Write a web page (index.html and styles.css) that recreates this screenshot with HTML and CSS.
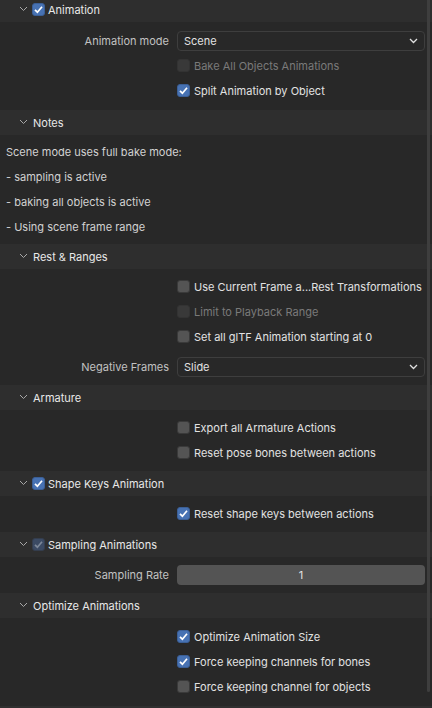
FILE: index.html
```html
<!DOCTYPE html>
<html>
<head>
<meta charset="utf-8">
<link rel="stylesheet" href="styles.css">
</head>
<body>
<div class="page">
  <div class="hdr hdr-first">
    <span class="chev"><svg width="9" height="6" viewBox="0 0 9 6"><path d="M1 1 L4.5 4.5 L8 1" fill="none" stroke="#a8a8a8" stroke-width="1"/></svg></span>
    <span class="cb on hcb"><svg width="13" height="13" viewBox="0 0 13 13"><path d="M3 6.8 L5.4 9.2 L10 3.8" fill="none" stroke="#fff" stroke-width="1.7"/></svg></span>
    <span class="htitle">Animation</span>
  </div>
  <div class="body body-anim">
    <div class="row">
      <div class="lbl">Animation mode</div>
      <div class="dd"><span>Scene</span><svg width="9" height="6" viewBox="0 0 9 6"><path d="M1 1 L4.5 4.5 L8 1" fill="none" stroke="#e0e0e0" stroke-width="1.3"/></svg></div>
    </div>
    <div class="row">
      <div></div>
      <div class="chk dis"><span class="cb"></span><span>Bake All Objects Animations</span></div>
    </div>
    <div class="row">
      <div></div>
      <div class="chk"><span class="cb on"><svg width="13" height="13" viewBox="0 0 13 13"><path d="M3 6.8 L5.4 9.2 L10 3.8" fill="none" stroke="#fff" stroke-width="1.7"/></svg></span><span>Split Animation by Object</span></div>
    </div>
  </div>

  <div class="hdr">
    <span class="chev"><svg width="9" height="6" viewBox="0 0 9 6"><path d="M1 1 L4.5 4.5 L8 1" fill="none" stroke="#a8a8a8" stroke-width="1"/></svg></span>
    <span class="htitle">Notes</span>
  </div>
  <div class="body body-notes">
    <div class="note">Scene mode uses full bake mode:</div>
    <div class="note">- sampling is active</div>
    <div class="note">- baking all objects is active</div>
    <div class="note">- Using scene frame range</div>
  </div>

  <div class="hdr">
    <span class="chev"><svg width="9" height="6" viewBox="0 0 9 6"><path d="M1 1 L4.5 4.5 L8 1" fill="none" stroke="#a8a8a8" stroke-width="1"/></svg></span>
    <span class="htitle">Rest &amp; Ranges</span>
  </div>
  <div class="body">
    <div class="row">
      <div></div>
      <div class="chk"><span class="cb"></span><span>Use Current Frame a...Rest Transformations</span></div>
    </div>
    <div class="row">
      <div></div>
      <div class="chk dis"><span class="cb"></span><span>Limit to Playback Range</span></div>
    </div>
    <div class="row">
      <div></div>
      <div class="chk"><span class="cb"></span><span>Set all glTF Animation starting at 0</span></div>
    </div>
    <div class="row row-gap">
      <div class="lbl">Negative Frames</div>
      <div class="dd"><span>Slide</span><svg width="9" height="6" viewBox="0 0 9 6"><path d="M1 1 L4.5 4.5 L8 1" fill="none" stroke="#e0e0e0" stroke-width="1.3"/></svg></div>
    </div>
  </div>

  <div class="hdr">
    <span class="chev"><svg width="9" height="6" viewBox="0 0 9 6"><path d="M1 1 L4.5 4.5 L8 1" fill="none" stroke="#a8a8a8" stroke-width="1"/></svg></span>
    <span class="htitle">Armature</span>
  </div>
  <div class="body">
    <div class="row">
      <div></div>
      <div class="chk"><span class="cb"></span><span>Export all Armature Actions</span></div>
    </div>
    <div class="row">
      <div></div>
      <div class="chk"><span class="cb"></span><span>Reset pose bones between actions</span></div>
    </div>
  </div>

  <div class="hdr">
    <span class="chev"><svg width="9" height="6" viewBox="0 0 9 6"><path d="M1 1 L4.5 4.5 L8 1" fill="none" stroke="#a8a8a8" stroke-width="1"/></svg></span>
    <span class="cb on hcb"><svg width="13" height="13" viewBox="0 0 13 13"><path d="M3 6.8 L5.4 9.2 L10 3.8" fill="none" stroke="#fff" stroke-width="1.7"/></svg></span>
    <span class="htitle">Shape Keys Animation</span>
  </div>
  <div class="body">
    <div class="row">
      <div></div>
      <div class="chk"><span class="cb on"><svg width="13" height="13" viewBox="0 0 13 13"><path d="M3 6.8 L5.4 9.2 L10 3.8" fill="none" stroke="#fff" stroke-width="1.7"/></svg></span><span>Reset shape keys between actions</span></div>
    </div>
  </div>

  <div class="hdr">
    <span class="chev"><svg width="9" height="6" viewBox="0 0 9 6"><path d="M1 1 L4.5 4.5 L8 1" fill="none" stroke="#a8a8a8" stroke-width="1"/></svg></span>
    <span class="cb on-dis hcb"><svg width="13" height="13" viewBox="0 0 13 13"><path d="M3 6.8 L5.4 9.2 L10 3.8" fill="none" stroke="#7c8798" stroke-width="1.7"/></svg></span>
    <span class="htitle">Sampling Animations</span>
  </div>
  <div class="body">
    <div class="row">
      <div class="lbl">Sampling Rate</div>
      <div class="num">1</div>
    </div>
  </div>

  <div class="hdr">
    <span class="chev"><svg width="9" height="6" viewBox="0 0 9 6"><path d="M1 1 L4.5 4.5 L8 1" fill="none" stroke="#a8a8a8" stroke-width="1"/></svg></span>
    <span class="htitle">Optimize Animations</span>
  </div>
  <div class="body body-last">
    <div class="row">
      <div></div>
      <div class="chk"><span class="cb on"><svg width="13" height="13" viewBox="0 0 13 13"><path d="M3 6.8 L5.4 9.2 L10 3.8" fill="none" stroke="#fff" stroke-width="1.7"/></svg></span><span>Optimize Animation Size</span></div>
    </div>
    <div class="row">
      <div></div>
      <div class="chk"><span class="cb on"><svg width="13" height="13" viewBox="0 0 13 13"><path d="M3 6.8 L5.4 9.2 L10 3.8" fill="none" stroke="#fff" stroke-width="1.7"/></svg></span><span>Force keeping channels for bones</span></div>
    </div>
    <div class="row">
      <div></div>
      <div class="chk"><span class="cb"></span><span>Force keeping channel for objects</span></div>
    </div>
  </div>
  <div class="foot"></div>
  <div class="scroll"></div>
</div>
</body>
</html>
```

FILE: styles.css
```css
* { box-sizing: border-box; }
html, body {
  margin: 0;
  padding: 0;
  background: #282828;
}
body {
  font-family: Inter, "Noto Sans", sans-serif;
  font-size: 11px;
  color: #e0e0e0;
  width: 432px;
  height: 708px;
  overflow: hidden;
}
.page {
  position: relative;
  width: 432px;
}
.hdr {
  height: 25px;
  background: #2e2e2e;
  display: flex;
  align-items: center;
  padding-left: 19px;
}
.hdr-first {
  margin-top: -3px;
}
.chev {
  width: 9px;
  height: 6px;
  display: flex;
  margin-right: 5px;
  margin-top: -2px;
}
.chev svg { display: block; }
.htitle {
  color: #e8e8e8;
}
.hcb {
  margin-left: -1px;
  margin-right: 3px;
}
.body {
  padding: 5px 0 6px 0;
}
.body-anim {
  padding: 6px 0 7px 0;
}
.body-notes {
  padding: 5px 0 4px 6px;
}
.body-last {
  padding: 6px 0 7px 0;
}
.note {
  height: 25px;
  line-height: 25px;
  color: #d2d2d2;
}
.row {
  height: 25px;
  display: grid;
  grid-template-columns: 169px 248px;
  column-gap: 8px;
  align-items: center;
}
.row-gap {
  margin-top: 5px;
}
.lbl {
  text-align: right;
  color: #c2c2c2;
}
.chk {
  display: flex;
  align-items: center;
  gap: 4px;
  color: #e2e2e2;
  white-space: nowrap;
}
.chk.dis { color: #7a7a7a; }
.cb {
  width: 13px;
  height: 13px;
  border-radius: 3px;
  background: #545454;
  border: 1px solid #3a3a3a;
  display: inline-flex;
  flex-shrink: 0;
  align-items: center;
  justify-content: center;
}
.cb svg { display: block; margin: -1px; }
.chk.dis .cb {
  background: #393939;
  border-color: #333;
}
.cb.on {
  background: #4772b3;
  border-color: #3b5f96;
}
.cb.on-dis {
  background: #3b4a63;
  border-color: #343d4d;
}
.dd {
  height: 20px;
  border: 1px solid #3e3e3e;
  border-radius: 4px;
  background: #282828;
  display: flex;
  align-items: center;
  justify-content: space-between;
  padding: 0 6px 0 6px;
  color: #e2e2e2;
}
.dd svg { display: block; }
.num {
  height: 20px;
  border-radius: 4px;
  background: #545454;
  display: flex;
  align-items: center;
  justify-content: center;
  color: #e2e2e2;
}
.foot {
  height: 10px;
  background: #303030;
}
.scroll {
  position: absolute;
  top: 0;
  left: 427px;
  width: 3px;
  height: 695px;
  border-radius: 2px;
  background: #3e3e3e;
}
```
